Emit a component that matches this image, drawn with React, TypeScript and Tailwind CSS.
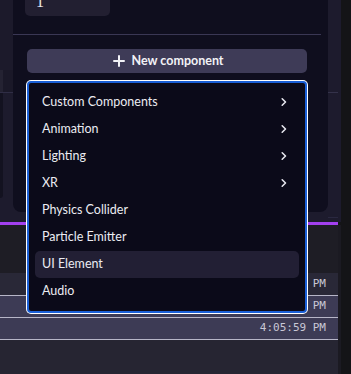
import React from "react";

const items: { label: string; sub?: boolean; active?: boolean }[] = [
  { label: "Custom Components", sub: true },
  { label: "Animation", sub: true },
  { label: "Lighting", sub: true },
  { label: "XR", sub: true },
  { label: "Physics Collider" },
  { label: "Particle Emitter" },
  { label: "UI Element", active: true },
  { label: "Audio" },
];

function Chevron() {
  return (
    <svg width="8" height="10" viewBox="0 0 8 10" className="shrink-0">
      <polyline points="2.2,1.8 5.5,5 2.2,8.2" fill="none" stroke="#e6e6ee" strokeWidth="1.6" strokeLinecap="round" strokeLinejoin="round" />
    </svg>
  );
}

export default function App() {
  return (
    <div className="w-[351px] h-[374px] overflow-hidden flex bg-[#141417] relative" style={{ fontFamily: "Lato, 'Noto Sans', sans-serif" }}>
      <div className="w-[341px] flex flex-col">
        {/* top section */}
        <div className="h-[222px] bg-[#1d1b2d] flex relative">
          <div className="w-[13px] flex flex-col">
            <div className="h-[70px] bg-[#1c1a2b]" />
            <div className="h-[22px] flex">
              <div className="w-[3px] bg-[#242232]" />
              <div className="flex-1 bg-[#1a1828]" />
            </div>
            <div className="h-px bg-[#2f2d45]" />
            <div className="flex-1 flex pb-[24px]">
              <div className="w-[3px] bg-[#131220] rounded-br-md" />
              <div className="flex-1" />
            </div>
          </div>
          <div className="w-[315px] h-[212px] bg-[#0f0e1e] rounded-b-lg flex flex-col relative">
            <div className="ml-[12px] mt-[-16px] w-[85px] h-[32px] bg-[#221f31] rounded-[5px] flex items-center pl-[11px]">
              <span className="text-[16px] text-[#e8e8ee] leading-none mt-[4px]" style={{ fontFamily: "'Liberation Serif', serif" }}>1</span>
            </div>
            <div className="mt-[18px] mr-[7px] h-px bg-[#3a3754]" />
            <div className="ml-[14px] mt-[14px] w-[280px] h-[24px] bg-[#3e3b57] rounded-[5px] flex items-center justify-center gap-[6px] pl-[3px] text-[#f2f2f6] text-[12.5px] font-bold">
              <svg width="12" height="12" viewBox="0 0 12 12">
                <path d="M6 1v10M1 6h10" stroke="#f2f2f6" strokeWidth="2" strokeLinecap="round" />
              </svg>
              <span>New component</span>
            </div>
          </div>
          <div className="flex-1 flex flex-col">
            <div className="h-[92px]" />
            <div className="h-px bg-[#34324a] w-[10px]" />
            <div className="flex-1" />
            <div className="h-px bg-[#2a2840] mb-[4px] w-[10px]" />
          </div>
        </div>
        {/* purple line */}
        <div className="h-[3px] w-[338px] bg-[#a340ef]" />
        {/* log area */}
        <div className="flex-1 flex">
          <div className="w-[338px] flex flex-col text-[11px] text-[#c9c8d6]" style={{ fontFamily: "'DejaVu Sans Mono', monospace" }}>
            <div className="h-[48px] bg-[#1e1d25]" />
            <div className="h-[22px] bg-[#292837] flex items-center justify-end pr-[12px]">PM</div>
            <div className="h-px bg-[#b7b6c8]" />
            <div className="h-[21px] bg-[#3d3b55] flex items-center justify-end pr-[12px]">PM</div>
            <div className="h-px bg-[#b7b6c8]" />
            <div className="h-[21px] bg-[#3d3b55] flex items-center justify-end pr-[12px]">4:05:59 PM</div>
            <div className="h-px bg-[#b7b6c8]" />
            <div className="flex-1 bg-[#262532]" />
          </div>
          <div className="flex-1 bg-[#1b1a22]" />
        </div>
      </div>
      <div className="flex-1 bg-[#141417]" />

      {/* dropdown menu */}
      <div className="absolute left-[26px] top-[80px] w-[282px] rounded-[5px] bg-white p-px">
        <div className="rounded-[4px] border-2 border-[#1a5fd6] bg-[#0b0a19] p-[6px]">
          {items.map((it) => (
            <div
              key={it.label}
              className={`h-[27px] flex items-center justify-between pl-[7px] pr-[11px] pb-px rounded-[5px] text-[12.5px] text-[#ececf2] ${it.active ? "bg-[#221f34]" : ""}`}
            >
              <span>{it.label}</span>
              {it.sub ? <Chevron /> : null}
            </div>
          ))}
        </div>
      </div>
    </div>
  );
}
